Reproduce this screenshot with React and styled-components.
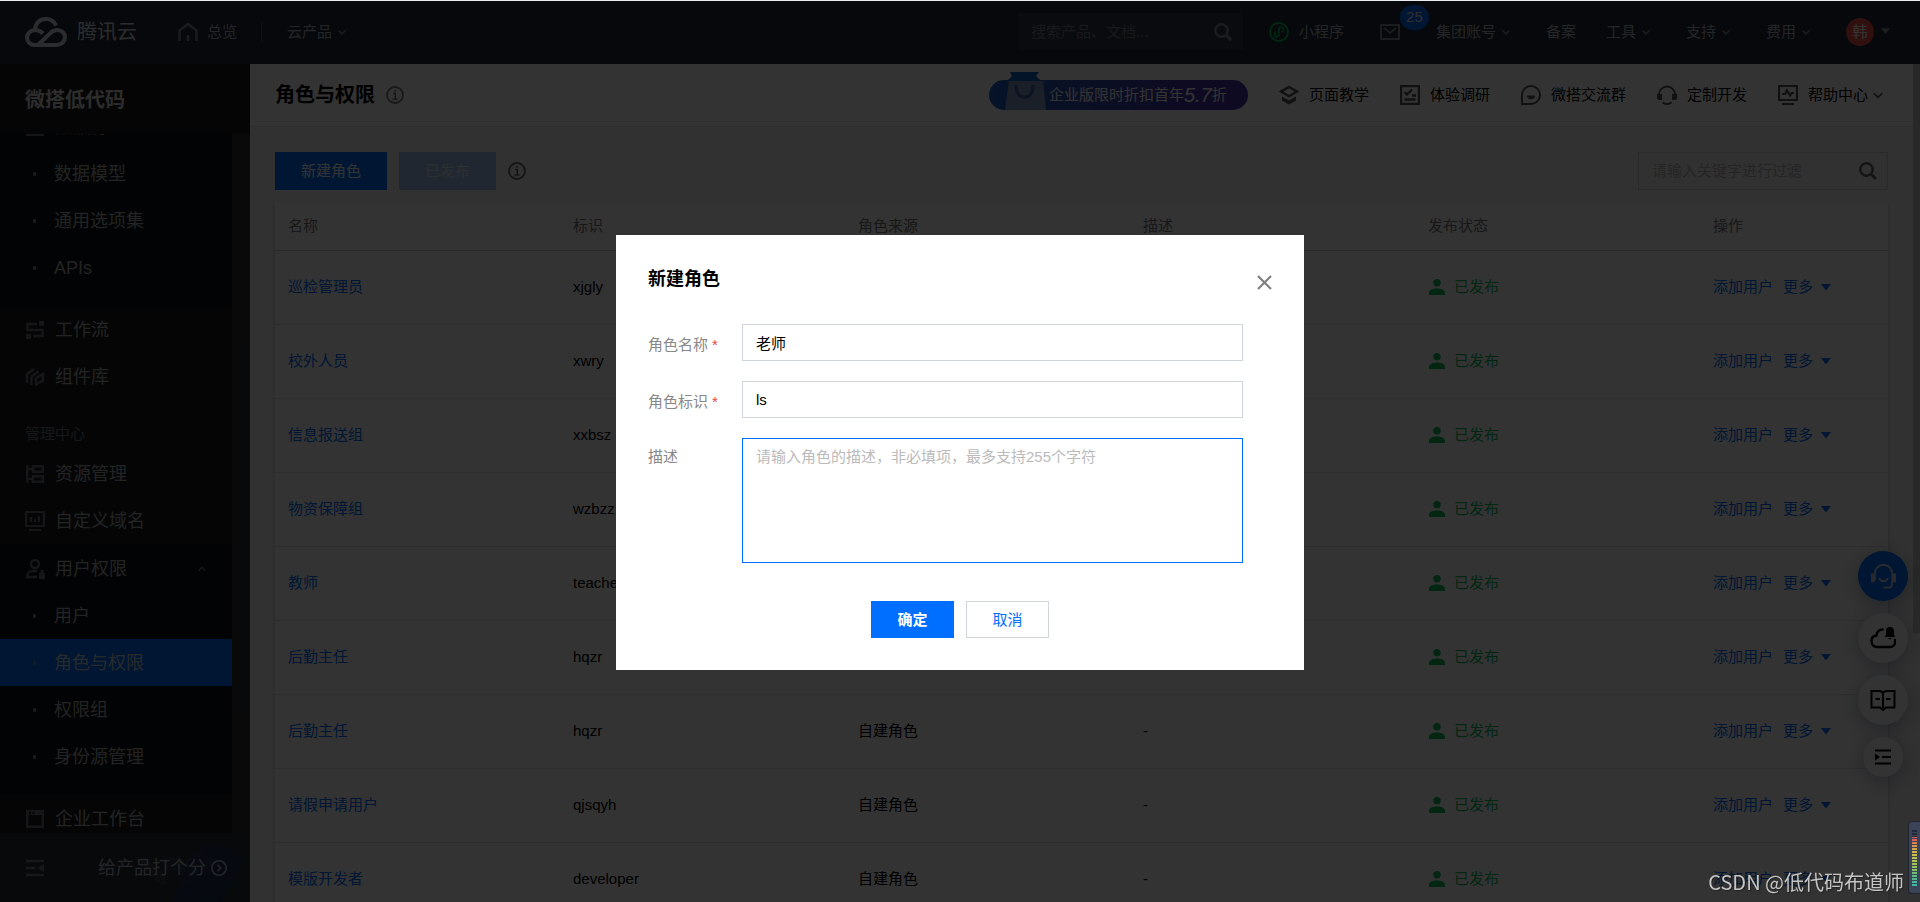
import React from "react";
import styled, { createGlobalStyle, css } from "styled-components";

const GlobalStyle = createGlobalStyle`
  *, *::before, *::after { box-sizing: border-box; }
  html, body { margin: 0; height: 100%; }
  body {
    font-family: "Liberation Sans", "Noto Sans CJK SC", sans-serif;
    font-size: 15px;
    line-height: 24px;
    color: #000;
    background: #e8ecee;
    overflow: hidden;
  }
  button, input, textarea { font: inherit; border-radius: 0; }
  button { cursor: pointer; padding: 0; border: 0; background: none; color: inherit; }
  a { color: inherit; text-decoration: none; }
  svg { display: block; flex: none; }
  h1, h2, ul, p { margin: 0; padding: 0; }
  ul { list-style: none; }
`;

const Page = styled.div`
  height: 100vh;
  padding-top: 1px;
  display: flex;
  flex-direction: column;
`;

/* ---------- top bar ---------- */
const TopBar = styled.header`
  flex: none;
  height: 63px;
  padding: 0 30px 2px 25px;
  display: flex;
  align-items: center;
  background: #242b38;
  color: #b4b8bf;
`;
const Brand = styled.a`
  display: flex;
  align-items: center;
  gap: 10px;
  margin-right: 41px;
  font-size: 20px;
  color: #d8dade;
`;
const TopItem = styled.a`
  display: flex;
  align-items: center;
  gap: ${(p) => p.$gap || 6}px;
  padding-right: ${(p) => (p.$wide ? 6 : 0)}px;
  white-space: nowrap;
  header & svg { color: #858a93; }
`;
const Divider = styled.span`
  width: 1px;
  height: 20px;
  margin: 0 25px 0 24px;
  background: #4b5260;
`;
const TopSearch = styled.form`
  flex: none;
  width: 225px;
  height: 37px;
  margin-left: auto;
  margin-right: 26px;
  padding: 0 11px 0 13px;
  display: flex;
  align-items: center;
  background: #303a45;
  color: #878d95;
`;
const BareInput = styled.input`
  flex: 1;
  min-width: 0;
  padding: 0;
  border: 0;
  outline: 0;
  background: transparent;
  color: inherit;
  &::placeholder { color: ${(p) => p.$hint}; opacity: 1; }
`;
const TopMenu = styled.nav`
  display: flex;
  align-items: center;
  gap: 30px;
`;
const Mail = styled.a`
  position: relative;
  padding-right: 6px;
  svg { color: #858a93; }
`;
const Badge = styled.span`
  position: absolute;
  left: 20px;
  bottom: 10px;
  width: 29px;
  height: 25px;
  border-radius: 13px;
  background: #006eff;
  color: #e5e5e5;
  text-align: center;
`;
const Avatar = styled.span`
  width: 28px;
  height: 28px;
  border-radius: 50%;
  background: #f0504a;
  color: #fff;
  line-height: 28px;
  text-align: center;
`;

/* ---------- side bar ---------- */
const Body = styled.div`
  flex: 1;
  min-height: 0;
  display: flex;
`;
const Side = styled.aside`
  flex: none;
  width: 250px;
  display: flex;
  flex-direction: column;
  background: #191d22;
  color: #aaadb0;
`;
const SideTitle = styled.h2`
  flex: none;
  height: 70px;
  padding-left: 25px;
  font-size: 20px;
  line-height: 72px;
  color: #dcdcdc;
`;
const SideScroll = styled.div`
  flex: 1;
  min-height: 0;
  display: flex;
  overflow: hidden;
`;
const SideMenu = styled.nav`
  flex: 1;
  margin-top: -32px;
  font-size: 18px;
`;
const SideTrack = styled.div`
  width: 18px;
  padding: 207px 5px 0;
  background: #303134;
`;
const SideThumb = styled.div`
  width: 8px;
  height: 375px;
  background: #262e3b;
`;
const MenuGroup = styled.div`
  padding: 1px 0 15px;
  background: #0e1114;
`;
const MenuItem = styled.a`
  height: 47px;
  padding: 0 26px 0 25px;
  display: grid;
  grid-template-columns: 20px 1fr auto;
  column-gap: 10px;
  align-items: center;
  justify-items: center;
  color: #aaadb0;
  svg { color: #6b6f74; }
  span { justify-self: start; }
`;
const SubItem = styled.a`
  height: 47px;
  padding-left: 33px;
  display: flex;
  align-items: center;
  gap: 18px;
  color: ${(p) => (p.$active ? "#c6cdd8" : "#aaadb0")};
  background: ${(p) => (p.$active ? "#006eff" : "transparent")};
  &::before {
    content: "";
    width: 3px;
    height: 4px;
    border-radius: 1px;
    background: #7f858b;
  }
`;
const MenuLabel = styled.p`
  padding: 19px 0 1px 25px;
  font-size: 15px;
  line-height: 30px;
  color: #70757a;
`;
const SideFoot = styled.div`
  position: relative;
  flex: none;
  height: 69px;
  padding: 0 22px 0 26px;
  display: flex;
  align-items: center;
  justify-content: space-between;
  background: #262d39;
  font-size: 18px;
  color: #b4b8bf;
  button { color: #747a84; }
`;
const FootArt = styled.svg`
  position: absolute;
  right: 0;
  bottom: 0;
`;
const Rate = styled.a`
  position: relative;
  display: flex;
  align-items: center;
  gap: 4px;
`;

/* ---------- content ---------- */
const Main = styled.main`
  flex: 1;
  min-width: 0;
  overflow: hidden;
  background: #f5f5f5;
`;
const Track = styled.div`
  flex: none;
  width: 7px;
  background: #f4f4f4;
`;
const Thumb = styled.div`
  height: 68%;
  border-radius: 0 0 4px 4px;
  background: #c9c9c9;
`;
const PageHead = styled.div`
  height: 63px;
  padding: 0 30px 0 25px;
  display: flex;
  align-items: center;
  gap: 31px;
  background: #fff;
  border-bottom: 1px solid #dcdfe3;
`;
const Title = styled.h1`
  margin-right: auto;
  display: flex;
  align-items: center;
  gap: 11px;
  font-size: 20px;
  white-space: nowrap;
  svg { color: #777; }
`;
const HeadLink = styled.a`
  display: flex;
  align-items: center;
  gap: 10px;
  white-space: nowrap;
  svg { color: #555; }
`;
const HelpLabel = styled.span`
  display: flex;
  align-items: center;
  gap: 5px;
`;
const Promo = styled.a`
  position: relative;
  width: 259px;
  height: 30px;
  padding-left: 60px;
  display: flex;
  align-items: center;
  border-radius: 15px;
  background: linear-gradient(90deg, #1f5fc8, #2f4fb4 30%, #4434a4 75%, #4a32a8);
  color: #fff;
  white-space: nowrap;
  em { font-size: 20px; }
  svg { position: absolute; left: 15px; bottom: -4px; }
`;
const Content = styled.section`
  padding: 25px;
`;
const Tools = styled.div`
  display: flex;
  align-items: center;
  gap: 12px;
  margin-bottom: 12px;
  > svg { color: #666; }
`;
const Button = styled.button`
  height: ${(p) => p.$h || 38}px;
  min-width: 83px;
  padding: 0 25px;
  border: 1px solid #006eff;
  background: #006eff;
  color: #fff;
  ${(p) => p.$kind === "plain" && css`
    border-color: #cfd5de;
    background: #fff;
    color: #006eff;
  `}
  &:disabled {
    border-color: #a6c4f0;
    background: #a6c4f0;
    color: #e0e8f4;
  }
`;
const Filter = styled.form`
  width: 250px;
  height: 38px;
  margin-left: auto;
  padding: 0 10px 0 13px;
  display: flex;
  align-items: center;
  border: 1px solid #cfd2d8;
  color: #666;
`;
const Table = styled.table`
  width: 100%;
  table-layout: fixed;
  border-collapse: collapse;
  background: #fff;
  box-shadow: 0 2px 4px rgba(54, 58, 80, 0.32);
  th, td { padding: 0 13px; text-align: left; font-weight: 400; }
  th { height: 48px; color: #777; border-bottom: 1px solid #d0d3d8; }
  td { height: 74px; border-bottom: 1px solid #dfe2e7; }
  th:last-child { width: 188px; }
`;
const Link = styled.a`
  color: #006eff;
`;
const Status = styled.span`
  display: flex;
  align-items: center;
  gap: 9px;
  padding-left: 1px;
  color: #0abf5b;
`;
const Actions = styled.span`
  display: flex;
  align-items: center;
  gap: 10px;
  color: #006eff;
  a { display: flex; align-items: center; gap: 8px; white-space: nowrap; }
`;

/* ---------- floating helpers ---------- */
const Dock = styled.div`
  position: fixed;
  right: 12px;
  bottom: 125px;
  display: flex;
  flex-direction: column;
  align-items: center;
  gap: 12px;
`;
const DockButton = styled.button`
  width: ${(p) => p.$size || 50}px;
  height: ${(p) => p.$size || 50}px;
  display: grid;
  place-items: center;
  border-radius: 50%;
  background: ${(p) => (p.$primary ? "#006eff" : "#fff")};
  color: ${(p) => (p.$primary ? "#c8d2e0" : "#000")};
  box-shadow: 0 4px 20px rgba(40, 60, 90, 0.4);
`;

/* ---------- dialog ---------- */
const Mask = styled.div`
  position: fixed;
  inset: 1px 0 0;
  padding-top: 2px;
  display: grid;
  place-items: center;
  background: rgba(0, 0, 0, 0.8);
`;
const Dialog = styled.section`
  width: 688px;
  padding: 32px;
  background: #fff;
`;
const DialogHead = styled.header`
  height: 24px;
  margin-bottom: 33px;
  display: flex;
  align-items: center;
  justify-content: space-between;
  h2 { font-size: 18px; }
  button { padding: 6px 0 0; color: #808080; }
`;
const Form = styled.form`
  display: grid;
  row-gap: 20px;
`;
const Field = styled.div`
  display: grid;
  grid-template-columns: 94px 1fr;
  padding-right: 29px;
`;
const Label = styled.label`
  padding-top: ${(p) => (p.$top ? 7 : 9)}px;
  color: #888;
  span { margin-left: 4px; color: #e54545; }
`;
const boxed = css`
  width: 100%;
  padding: 0 13px;
  border: 1px solid #cfd5de;
  outline: 0;
  background: #fff;
  color: #000;
  &::placeholder { color: #bbb; opacity: 1; }
`;
const TextInput = styled.input`
  ${boxed}
  height: 37px;
`;
const TextArea = styled.textarea`
  ${boxed}
  display: block;
  height: 125px;
  padding: 6px 13px;
  border-color: #006eff;
  resize: none;
`;
const DialogFoot = styled.footer`
  margin-top: 18px;
  display: flex;
  justify-content: center;
  gap: 12px;
  button:first-child { font-weight: 700; }
`;

/* ---------- overlays on top of everything ---------- */
const Credit = styled.p`
  position: fixed;
  right: 16px;
  bottom: 5px;
  font-family: "Noto Sans CJK SC", sans-serif;
  font-size: 20px;
  line-height: 30px;
  color: #c4c4c4;
  text-shadow: 1px 1px 1px #222;
`;
const Meter = styled.div`
  position: fixed;
  right: 0;
  bottom: 8px;
  width: 12px;
  height: 73px;
  padding: 8px 3px 7px;
  border: 1px solid #20242e;
  border-right: 0;
  border-radius: 4px 0 0 4px;
  background: #3b4359;
`;
const MeterBars = styled.div`
  width: 5px;
  height: 56px;
  background:
    repeating-linear-gradient(#3b435900 0 2px, #3b4359 2px 3px),
    linear-gradient(#23283a 0 7px, #d9605a 7px 10px, #d98a4a 14px, #cfc045 24px, #9dc555 36px, #53b884 48px, #3fb8a8);
`;

/* ---------- icons ---------- */
const Svg = ({ s = 20, w, h, vb = 20, sw = 2, children }) => (
  <svg width={w || s} height={h || s} viewBox={typeof vb === "string" ? vb : `0 0 ${vb} ${vb}`}
    fill="none" stroke="currentColor" strokeWidth={sw} aria-hidden="true">{children}</svg>
);
const CloudLogo = () => (
  <Svg w={42} h={30} vb="0 0 42 30" sw={4}>
    <path d="M10 12.2C10.5 6 15 2 20.800 2c4.700 0 8.500 2.500 10.200 6.500" />
    <path d="M18 16.500c-2.200-2.200-4.700-3.500-7.500-3.500C5.500 13 2 16.500 2 20.600 2 25 5.500 28 10 28h21.500c4.800 0 8.500-3.400 8.500-7.700 0-4.200-3.500-7.300-7.500-7.300-3.200 0-5.300 1.200-7.700 3.600L13.500 27.500" />
  </Svg>
);
const Home = () => (
  <Svg sw={2.400}><path d="M1.500 19V8.500L10 2l8.500 6.500V19M10 13v6" /></Svg>
);
const Chevron = ({ up, w = 8 }) => (
  <Svg w={w} h={w} vb="0 0 8 8" sw={w > 8 ? 1.2 : 1.5}><path d={up ? "M.8 5.500L4 2.300l3.200 3.200" : "M.6 2.500L4 5.900l3.400-3.400"} /></Svg>
);
const Caret = ({ w = 10 }) => (
  <Svg w={w} h={7} vb="0 0 10 7"><path d="M0 0h10L5 6.500z" fill="currentColor" stroke="none" /></Svg>
);
const Search = () => (
  <Svg s={18} vb={18} sw={2.400}><circle cx="7.500" cy="7.500" r="6.200" /><path d="M12 12l5 5" strokeWidth="3" /></Svg>
);
const MiniApp = () => (
  <Svg><g stroke="#07c160"><circle cx="10" cy="10" r="9" /><path d="M7.500 10.200a2.300 2.300 0 1 0 2.400 2.300V7.500a2.300 2.300 0 1 1 2.500 2.300" strokeWidth="1.700" /></g></Svg>
);
const MailIcon = () => (
  <Svg w={20} h={16} vb="0 0 20 16"><path d="M1 1h18v14H1zM4 4l6 5 6-5" /></Svg>
);
const Info = () => (
  <Svg s={18} vb={18} sw={1.800}><circle cx="9" cy="9" r="8" /><path d="M7 7.500h2.300V13M6.500 13h5M8.300 5h1.800" strokeWidth="1.500" /></Svg>
);
const Layers = () => (
  <Svg sw={2.400}><path d="M10 2l8 4.600-8 4.600-8-4.600z" /><path d="M3 11.500l7 4 7-4v4l-7 4-7-4z" fill="currentColor" stroke="none" /></Svg>
);
const Survey = () => (
  <Svg sw={2.400}><path d="M1 1h18v18H1zM4.500 7l2.500 2.500 5-5M4.500 14.500h11M12 10.500h4" /></Svg>
);
const Chat = () => (
  <Svg><path d="M1 19v-9a9 9 0 1 1 9 9z" /><path d="M6 10.500h8a4 3.800 0 0 1-8 0z" fill="currentColor" stroke="none" /></Svg>
);
const Headset = () => (
  <Svg><path d="M2 12V9.500a8 8 0 0 1 16 0V12M5.500 17.500c2.800 2 6.200 2 9 0" /><path d="M0 9h5v6H2a2 2 0 0 1-2-2zM15 9h5v4a2 2 0 0 1-2 2h-3z" fill="currentColor" stroke="none" /></Svg>
);
const Monitor = () => (
  <Svg sw={2.200}><path d="M1 1h18v14H1zM4 19h12M4 9h3l2-3.500 3 5 1.500-2.500H16" /></Svg>
);
const Bag = () => (
  <svg width="44" height="46" viewBox="0 0 44 46" aria-hidden="true">
    <path d="M6 4h29l-3 4 5 5H3l5-5z" fill="#1262c8" />
    <path d="M5 13h34l3 29H1z" fill="#a3b3c9" fillOpacity=".75" />
    <path d="M5 13h34l1 8H4z" fill="#8098bd" fillOpacity=".5" />
    <path d="M12 18c0 15 17 15 17 0" fill="none" stroke="#3d62a8" strokeWidth="3" strokeLinecap="round" />
  </svg>
);
const Database = () => (
  <Svg s={18} vb={18} sw={2.600}><path d="M1 1h16v15.700H1zM1 9h16" /></Svg>
);
const Flow = () => (
  <Svg s={18} vb={18} sw={2.400}><path d="M11 3H1.500v6h15v6H7" /><path d="M13 0h5v5h-5zM0 13h5v5H0z" fill="currentColor" stroke="none" /></Svg>
);
const Components = () => (
  <Svg sw={2.400}><path d="M2 16V7l7-5M6.500 18V9.500l7-5M11 17.500v-6.500l7-4v6.500z" /></Svg>
);
const Resource = () => (
  <Svg s={18} vb={18} sw={2.400}><path d="M1.200 0v18M1 4h6M1 14h6M7 1.200h9.800v5.600H7zM7 11.200h9.800v5.600H7z" /></Svg>
);
const Domain = () => (
  <Svg sw={2.200}><path d="M1 1h18v14H1zM4 19h12M6 11V6M10 11V8M14 11V5" /></Svg>
);
const UserLock = () => (
  <Svg sw={2.400}><circle cx="10" cy="5" r="4" /><path d="M12 12H8c-4 0-6 2-6 6h10" /><path d="M14 14h6v6h-6zM15.500 11h3v4h-3z" fill="currentColor" stroke="none" /></Svg>
);
const Workbench = () => (
  <Svg s={18} vb={18} sw={2.400}><path d="M1.200 1.200h15.600v15.600H1.200z" /><path d="M1 1h16v4H1z" fill="currentColor" stroke="none" /><path d="M3 3h2M6.500 3h2" stroke="#191d22" /></Svg>
);
const Collapse = () => (
  <Svg s={18} vb={18} sw={2.400}><path d="M0 2h18M0 9h9M0 16h18" /><path d="M18 5v8l-6-4z" fill="currentColor" stroke="none" /></Svg>
);
const CircleArrow = () => (
  <Svg s={18} vb={18} sw={1.600}><circle cx="9" cy="9" r="7.200" /><path d="M7.500 5.800L10.700 9l-3.200 3.200" /></Svg>
);
const Person = () => (
  <Svg s={16} vb={16}><path d="M8 0a3.700 3.700 0 1 1 0 7.500A3.700 3.700 0 0 1 8 0zM0 16v-2.500C0 11 4 9.500 8 9.500s8 1.500 8 4V16z" fill="currentColor" stroke="none" /></Svg>
);
const Close = () => (
  <Svg s={15} vb={15} sw={2.200}><path d="M1 1l13 13M14 1L1 14" /></Svg>
);
const Support = () => (
  <Svg s={25} vb={26}><path d="M4 17V9.500A8.500 8.500 0 0 1 13 1a8.500 8.500 0 0 1 9 8.500V17M22 17v3.500c0 2.500-1.500 4-4 4h-5M8.500 14.500c1.500 4.500 7.500 4.500 9 0" /><path d="M0 10h4v9H0zM22 10h4v9h-4z" fill="currentColor" stroke="none" /></Svg>
);
const CloudBell = () => (
  <Svg s={26} vb={26} sw={2.400}><path d="M13.500 4.500c-4-.5-6.800 2-7.200 6C3 11 1.500 13 1.500 16c0 3.500 2.500 6 5.500 6h13c3 0 5-2 5-4.800V14" /><path d="M16 10V6a4 4 0 0 1 8 0v4l1.500 2h-11zM18 13h4l-2 1.500z" fill="currentColor" stroke="none" /></Svg>
);
const Book = () => (
  <Svg s={26} vb={26}><path d="M13 6c-1-1.500-2.500-2-4-2H1.500v16.500H10l3 2.500 3-2.500h8.500V4H17c-1.500 0-3 .5-4 2zv15" /><path d="M5.500 12H10M16 12h4.500" /></Svg>
);
const Expand = () => (
  <Svg w={16} h={16} vb="0 0 16 16"><path d="M0 1.500h16M7 8h9M0 14.500h16" /><path d="M0 4.500v7L5 8z" fill="currentColor" stroke="none" /></Svg>
);

/* ---------- data ---------- */
const roles = [
  ["巡检管理员", "xjgly"],
  ["校外人员", "xwry"],
  ["信息报送组", "xxbsz"],
  ["物资保障组", "wzbzz"],
  ["教师", "teacher"],
  ["后勤主任", "hqzr"],
  ["后勤主任", "hqzr"],
  ["请假申请用户", "qjsqyh"],
  ["模版开发者", "developer"],
];
const columns = ["名称", "标识", "角色来源", "描述", "发布状态", "操作"];
const headLinks = [
  [Layers, "页面教学"],
  [Survey, "体验调研"],
  [Chat, "微搭交流群"],
  [Headset, "定制开发"],
];

const Item = ({ icon: Icon, children, open }) => (
  <MenuItem href="#"><Icon /><span>{children}</span>{open && <Chevron up />}</MenuItem>
);
const Drop = ({ children }) => (
  <TopItem href="#" $wide>{children}<Chevron /></TopItem>
);

export default function App() {
  return (
    <Page>
      <GlobalStyle />
      <TopBar>
        <Brand href="#"><CloudLogo />腾讯云</Brand>
        <TopItem href="#" $gap={9}><Home />总览</TopItem>
        <Divider />
        <Drop>云产品</Drop>
        <TopSearch>
          <BareInput aria-label="搜索" placeholder="搜索产品、文档..." $hint="#757c86" />
          <Search />
        </TopSearch>
        <TopMenu>
          <TopItem href="#" $gap={10} $wide><MiniApp />小程序</TopItem>
          <Mail href="#" aria-label="消息"><MailIcon /><Badge>25</Badge></Mail>
          <Drop>集团账号</Drop>
          <TopItem href="#">备案</TopItem>
          <Drop>工具</Drop>
          <Drop>支持</Drop>
          <Drop>费用</Drop>
          <TopItem href="#" $gap={7}><Avatar>韩</Avatar><Caret w={9} /></TopItem>
        </TopMenu>
      </TopBar>

      <Body>
        <Side>
          <SideTitle>微搭低代码</SideTitle>
          <SideScroll>
            <SideMenu>
              <MenuGroup>
                <Item icon={Database}>数据源</Item>
                <SubItem href="#">数据模型</SubItem>
                <SubItem href="#">通用选项集</SubItem>
                <SubItem href="#">APIs</SubItem>
              </MenuGroup>
              <Item icon={Flow}>工作流</Item>
              <Item icon={Components}>组件库</Item>
              <MenuLabel>管理中心</MenuLabel>
              <Item icon={Resource}>资源管理</Item>
              <Item icon={Domain}>自定义域名</Item>
              <MenuGroup>
                <Item icon={UserLock} open>用户权限</Item>
                <SubItem href="#">用户</SubItem>
                <SubItem href="#" $active>角色与权限</SubItem>
                <SubItem href="#">权限组</SubItem>
                <SubItem href="#">身份源管理</SubItem>
              </MenuGroup>
              <Item icon={Workbench}>企业工作台</Item>
            </SideMenu>
            <SideTrack><SideThumb /></SideTrack>
          </SideScroll>
          <SideFoot>
            <FootArt width="120" height="60" viewBox="0 0 120 60" aria-hidden="true">
              <defs>
                <linearGradient id="clip" x1="0" y1="0" x2="1" y2="1">
                  <stop offset="0" stopColor="#2a3a58" />
                  <stop offset="1" stopColor="#182a4c" />
                </linearGradient>
              </defs>
              <path d="M4 16l10-1 18 13 6 16-10-3z" fill="#343c49" />
              <path d="M31 15l32 2-6 14-20-4z" fill="#303845" />
              <path d="M64 8l50 7-22 45H43z" fill="url(#clip)" />
              <path d="M74 3l26 2 4 12-33-3z" fill="#223350" />
            </FootArt>
            <button aria-label="收起菜单"><Collapse /></button>
            <Rate href="#">给产品打个分<CircleArrow /></Rate>
          </SideFoot>
        </Side>

        <Main>
          <PageHead>
            <Title>角色与权限<Info /></Title>
            <Promo href="#"><Bag />企业版限时折扣首年<em>5.7</em>折</Promo>
            {headLinks.map(([Icon, text]) => (
              <HeadLink href="#" key={text}><Icon />{text}</HeadLink>
            ))}
            <HeadLink href="#"><Monitor /><HelpLabel>帮助中心<Chevron w={10} /></HelpLabel></HeadLink>
          </PageHead>
          <Content>
            <Tools>
              <Button>新建角色</Button>
              <Button disabled>已发布</Button>
              <Info />
              <Filter>
                <BareInput aria-label="过滤" placeholder="请输入关键字进行过滤" $hint="#b5b5b5" />
                <Search />
              </Filter>
            </Tools>
            <Table>
              <thead>
                <tr>{columns.map((c) => <th key={c}>{c}</th>)}</tr>
              </thead>
              <tbody>
                {roles.map(([name, id], i) => (
                  <tr key={i}>
                    <td><Link href="#">{name}</Link></td>
                    <td>{id}</td>
                    <td>自建角色</td>
                    <td>-</td>
                    <td><Status><Person />已发布</Status></td>
                    <td><Actions><a href="#">添加用户</a><a href="#">更多<Caret /></a></Actions></td>
                  </tr>
                ))}
              </tbody>
            </Table>
          </Content>
        </Main>
        <Track><Thumb /></Track>
      </Body>

      <Dock>
        <DockButton $primary aria-label="客服"><Support /></DockButton>
        <DockButton aria-label="通知"><CloudBell /></DockButton>
        <DockButton aria-label="文档"><Book /></DockButton>
        <DockButton $size={40} aria-label="收起"><Expand /></DockButton>
      </Dock>

      <Mask>
        <Dialog role="dialog" aria-modal="true" aria-labelledby="dialog-title">
          <DialogHead>
            <h2 id="dialog-title">新建角色</h2>
            <button aria-label="关闭"><Close /></button>
          </DialogHead>
          <Form>
            <Field>
              <Label htmlFor="role-name">角色名称<span>*</span></Label>
              <TextInput id="role-name" defaultValue="老师" />
            </Field>
            <Field>
              <Label htmlFor="role-id">角色标识<span>*</span></Label>
              <TextInput id="role-id" defaultValue="ls" />
            </Field>
            <Field>
              <Label htmlFor="role-desc" $top>描述</Label>
              <TextArea id="role-desc" placeholder="请输入角色的描述，非必填项，最多支持255个字符" />
            </Field>
            <DialogFoot>
              <Button type="button" $h={37}>确定</Button>
              <Button type="button" $h={37} $kind="plain">取消</Button>
            </DialogFoot>
          </Form>
        </Dialog>
      </Mask>

      <Credit>CSDN @低代码布道师</Credit>
      <Meter><MeterBars /></Meter>
    </Page>
  );
}
